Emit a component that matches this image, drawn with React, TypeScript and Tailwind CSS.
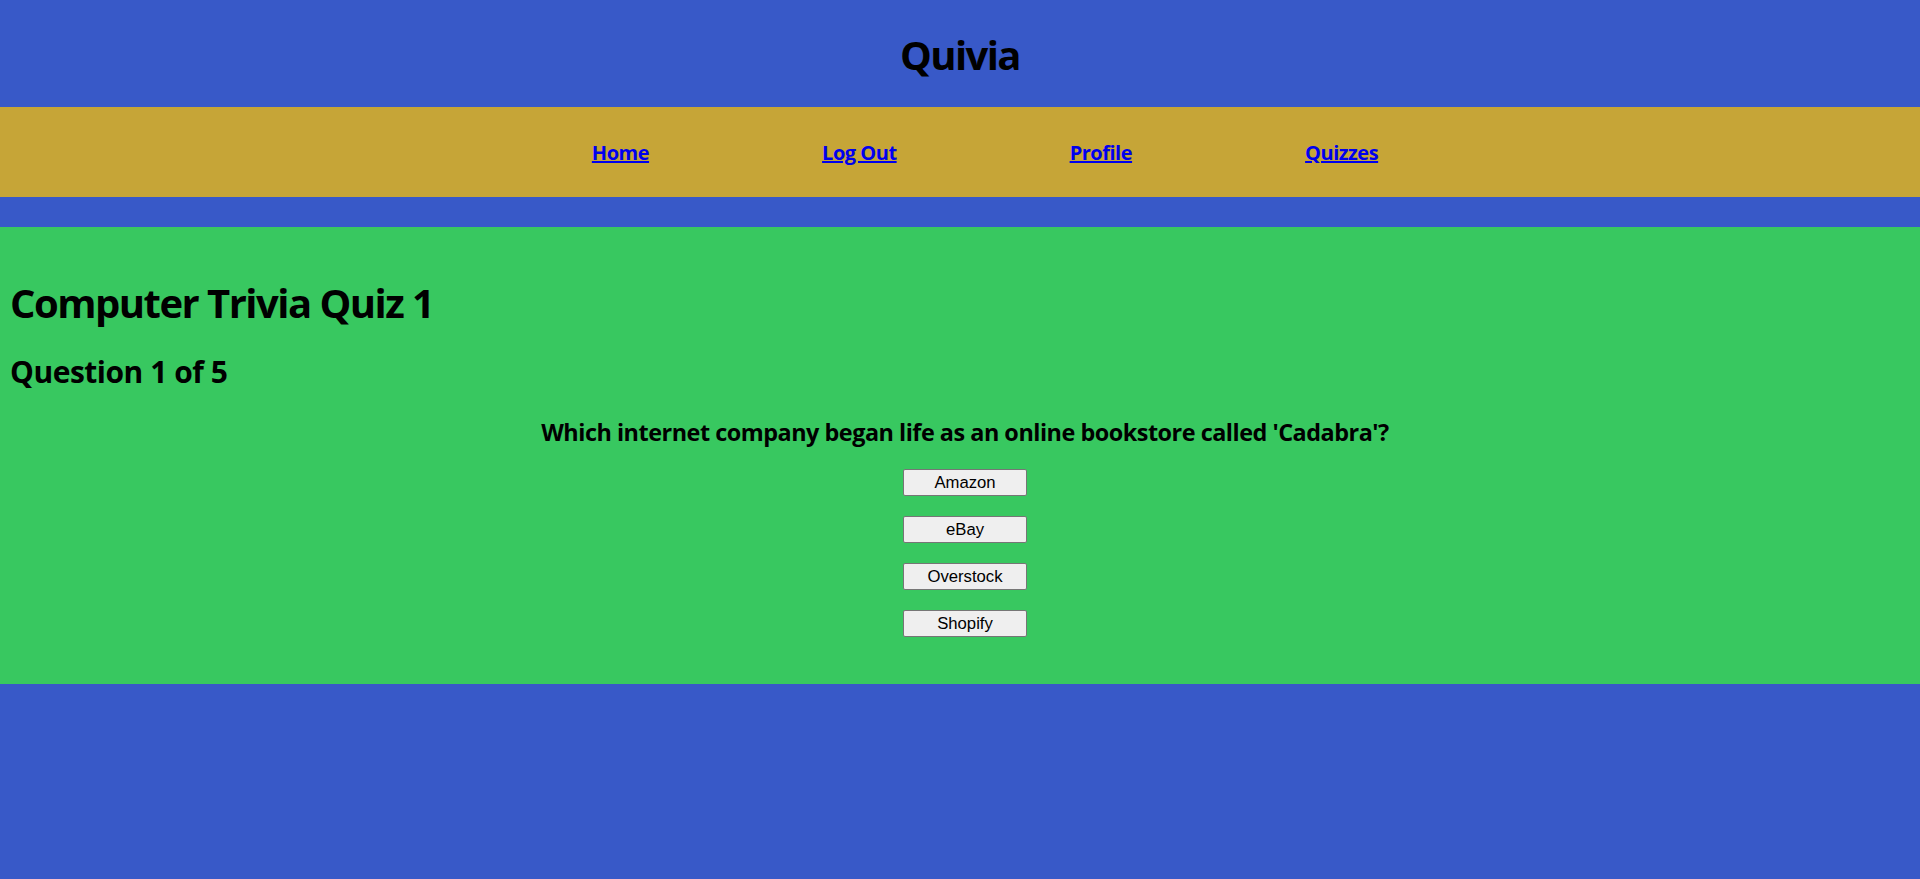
import React from "react";

const answers = ["Amazon", "eBay", "Overstock", "Shopify"];
const links = ["Home", "Log Out", "Profile", "Quizzes"];

export default function App() {
  return (
    <div
      className="min-h-[879px] bg-[#3859c8] text-black tracking-[-0.03em]"
      style={{ fontFamily: '"Open Sans", "Noto Sans", sans-serif' }}
    >
      <header className="h-[107px] pt-[31px]">
        <h1 className="text-center text-[40px] leading-[48px] font-bold tracking-[-0.04em]">Quivia</h1>
      </header>

      <nav className="h-[90px] bg-[#c6a537] pt-[34px]">
        <ul className="flex justify-center gap-[173px] pl-[50px]">
          {links.map((l) => (
            <li key={l}>
              <a
                href="#"
                className="text-[20px] leading-[24px] font-bold text-[#0000ee] underline"
              >
                {l}
              </a>
            </li>
          ))}
        </ul>
      </nav>

      <main className="mt-[30px] h-[457px] bg-[#38c860] pl-[10px] pt-[52px]">
        <h1 className="text-[40px] leading-[48px] font-bold tracking-[-0.038em]">
          Computer Trivia Quiz 1
        </h1>
        <h2 className="mt-[27px] text-[30px] leading-[36px] font-bold">
          Question 1 of 5
        </h2>
        <p className="mt-[28px] text-center text-[23.4px] leading-[28px] font-bold">
          Which internet company began life as an online bookstore called 'Cadabra'?
        </p>
        <div className="mt-[23px] flex flex-col items-center gap-[20px] tracking-normal">
          {answers.map((a) => (
            <button
              key={a}
              className="h-[27px] w-[124px] rounded-[2px] border border-[#767676] bg-[#efefef] text-[16.7px] leading-[20px] text-black"
              style={{ fontFamily: '"Liberation Sans", Arial, sans-serif' }}
            >
              {a}
            </button>
          ))}
        </div>
      </main>
    </div>
  );
}
